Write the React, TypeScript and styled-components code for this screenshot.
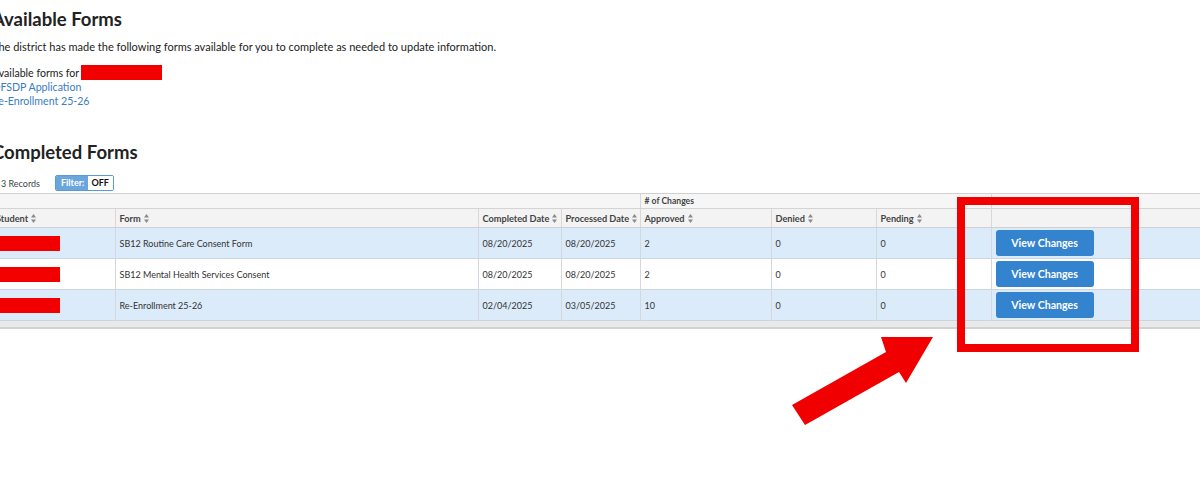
import React from "react";
import styled, { createGlobalStyle } from "styled-components";

const GlobalStyle = createGlobalStyle`
  html, body {
    margin: 0;
    padding: 0;
    background: #ffffff;
    overflow: hidden;
  }
  body {
    font-family: Lato, "Open Sans", "Liberation Sans", sans-serif;
    color: #333333;
  }
`;

const Page = styled.div`
  position: relative;
  width: 1200px;
  height: 494px;
  overflow: hidden;
`;

const Content = styled.div`
  margin-left: -8px;
  padding-top: 7px;
  display: flex;
  flex-direction: column;
`;

const Heading = styled.h1<{ $top?: number }>`
  margin: ${(p) => p.$top ?? 0}px 0 0 0;
  font-size: 18.5px;
  line-height: 24px;
  font-weight: 700;
  color: #222222;
`;

const Intro = styled.p`
  margin: 9px 0 0 0;
  font-size: 11px;
  line-height: 14px;
  color: #222222;
`;

const FormList = styled.div`
  margin-top: 11px;
  display: flex;
  flex-direction: column;
  font-size: 10.6px;
  line-height: 14px;
`;

const ForLine = styled.div`
  display: flex;
  align-items: center;
  gap: 2px;
  color: #222222;
`;

const Redacted = styled.span<{ $w: number; $h: number }>`
  display: inline-block;
  width: ${(p) => p.$w}px;
  height: ${(p) => p.$h}px;
  background: #f20000;
  vertical-align: middle;
`;

const FormLink = styled.a`
  color: #3a7cc0;
  text-decoration: none;
`;

const Toolbar = styled.div`
  margin-top: 12px;
  padding-left: 9px;
  display: flex;
  align-items: center;
  gap: 15px;
  height: 14px;
  font-size: 9px;
  color: #444444;
`;

const Toggle = styled.div`
  display: flex;
  height: 14px;
  border: 1px solid #5b9bd5;
  border-radius: 2px;
  overflow: hidden;
  font-size: 9px;
  font-weight: 700;
  line-height: 14px;
`;

const ToggleLabel = styled.span`
  background: #6aa6dc;
  color: #ffffff;
  padding: 0 4px 0 5px;
`;

const ToggleValue = styled.span`
  background: #ffffff;
  color: #111111;
  padding: 0 4px 0 3px;
`;

const Table = styled.table`
  margin-top: 3px;
  width: 1216px;
  table-layout: fixed;
  border-collapse: collapse;
  border-top: 1px solid #d0d0d0;
  border-bottom: 2px solid #d2d2d2;
  font-size: 9px;
`;

const GroupTh = styled.th<{ $divider?: boolean }>`
  height: 14px;
  padding: 0 4px;
  background: #f6f6f6;
  border-bottom: 1px solid #d4d4d4;
  border-left: ${(p) => (p.$divider ? "1px solid #d8d8d8" : "none")};
  text-align: left;
  font-weight: 700;
  font-size: 8.6px;
  color: #444444;
`;

const HeadTh = styled.th`
  height: 18px;
  padding: 0 4px;
  background: #f3f3f3;
  border-left: 1px solid #d8d8d8;
  border-bottom: 1px solid #d0d0d0;
  text-align: left;
  font-weight: 700;
  font-size: 9.2px;
  color: #444444;
  white-space: nowrap;
  &:first-child {
    border-left: none;
  }
`;

const Row = styled.tr<{ $alt: boolean }>`
  background: ${(p) => (p.$alt ? "#ffffff" : "#dcebfa")};
  border-bottom: 1px solid #cbd5df;
`;

const Td = styled.td`
  height: 30px;
  padding: 0 4px;
  border-left: 1px solid #d2d8df;
  color: #333333;
  white-space: nowrap;
  &:first-child {
    border-left: none;
    padding-left: 0;
  }
`;

const FooterCell = styled.td`
  height: 6px;
  padding: 0;
  background: #e9e9e9;
`;

const SortWrap = styled.svg`
  margin-left: 3px;
  vertical-align: -1px;
`;

const ViewButton = styled.button`
  width: 98px;
  height: 26px;
  border: none;
  border-radius: 3px;
  background: #3483cf;
  color: #ffffff;
  font-family: Lato, "Open Sans", "Liberation Sans", sans-serif;
  font-size: 10.6px;
  font-weight: 700;
  cursor: pointer;
`;

const Annotations = styled.svg`
  position: absolute;
  left: 0;
  top: 0;
  pointer-events: none;
`;

function SortIcon() {
  return (
    <SortWrap width="5" height="9" viewBox="0 0 5 9">
      <path d="M2.5 0 L5 3.6 L0 3.6 Z" fill="#8a8a8a" />
      <path d="M0 5.4 L5 5.4 L2.5 9 Z" fill="#8a8a8a" />
    </SortWrap>
  );
}

const columns = [
  { label: "Student", width: 123 },
  { label: "Form", width: 363 },
  { label: "Completed Date", width: 83 },
  { label: "Processed Date", width: 79 },
  { label: "Approved", width: 131 },
  { label: "Denied", width: 105 },
  { label: "Pending", width: 115 },
  { label: "", width: 217 },
];

const rows = [
  { form: "SB12 Routine Care Consent Form", completed: "08/20/2025", processed: "08/20/2025", approved: "2", denied: "0", pending: "0" },
  { form: "SB12 Mental Health Services Consent", completed: "08/20/2025", processed: "08/20/2025", approved: "2", denied: "0", pending: "0" },
  { form: "Re-Enrollment 25-26", completed: "02/04/2025", processed: "03/05/2025", approved: "10", denied: "0", pending: "0" },
];

export default function App() {
  return (
    <Page>
      <GlobalStyle />
      <Content>
        <Heading>Available Forms</Heading>
        <Intro>
          The district has made the following forms available for you to complete as needed to update information.
        </Intro>
        <FormList>
          <ForLine>
            Available forms for <Redacted $w={81} $h={15} />
          </ForLine>
          <FormLink href="#">OFSDP Application</FormLink>
          <FormLink href="#">Re-Enrollment 25-26</FormLink>
        </FormList>

        <Heading $top={32}>Completed Forms</Heading>
        <Toolbar>
          <span>3 Records</span>
          <Toggle>
            <ToggleLabel>Filter:</ToggleLabel>
            <ToggleValue>OFF</ToggleValue>
          </Toggle>
        </Toolbar>

        <Table>
          <colgroup>
            {columns.map((c, i) => (
              <col key={i} style={{ width: c.width }} />
            ))}
          </colgroup>
          <thead>
            <tr>
              <GroupTh colSpan={4} />
              <GroupTh colSpan={3} $divider>
                # of Changes
              </GroupTh>
              <GroupTh $divider />
            </tr>
            <tr>
              {columns.map((c, i) => (
                <HeadTh key={i}>
                  {c.label}
                  {c.label && <SortIcon />}
                </HeadTh>
              ))}
            </tr>
          </thead>
          <tbody>
            {rows.map((r, i) => (
              <Row key={i} $alt={i % 2 === 1}>
                <Td>
                  <Redacted $w={68} $h={15} />
                </Td>
                <Td>{r.form}</Td>
                <Td>{r.completed}</Td>
                <Td>{r.processed}</Td>
                <Td>{r.approved}</Td>
                <Td>{r.denied}</Td>
                <Td>{r.pending}</Td>
                <Td>
                  <ViewButton>View Changes</ViewButton>
                </Td>
              </Row>
            ))}
            <tr>
              <FooterCell colSpan={8} />
            </tr>
          </tbody>
        </Table>
      </Content>

      <Annotations width="1200" height="494" viewBox="0 0 1200 494">
        <rect x="961" y="201" width="174" height="147" fill="none" stroke="#f00000" strokeWidth="8" />
        <polygon
          points="792,405 886,352 881,337 933,337 906,383 899,372 805,425"
          fill="#f00000"
        />
      </Annotations>
    </Page>
  );
}
